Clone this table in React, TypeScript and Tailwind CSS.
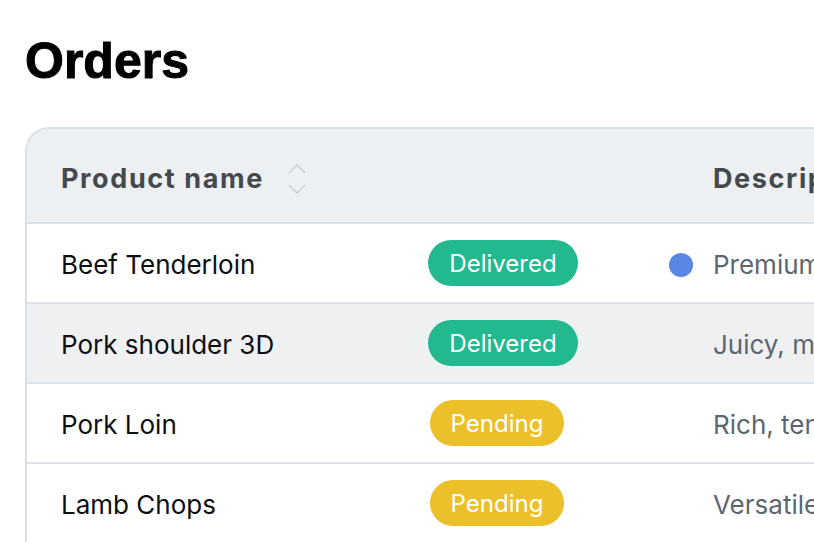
import React from "react";

type Status = "Delivered" | "Pending";

const orders: { name: string; status: Status; desc: string; dot?: boolean }[] = [
  { name: "Beef Tenderloin", status: "Delivered", desc: "Premium cut, tender and lean", dot: true },
  { name: "Pork shoulder 3D", status: "Delivered", desc: "Juicy, marbled and slow-cook ready" },
  { name: "Pork Loin", status: "Pending", desc: "Rich, tender and versatile" },
  { name: "Lamb Chops", status: "Pending", desc: "Versatile and full of flavour" },
];

function SortIcon() {
  return (
    <svg width="18" height="32" viewBox="0 0 18 32" fill="none" className="shrink-0 text-[#c9cfd5]">
      <path d="M1 10L9 2L17 10" stroke="currentColor" strokeWidth="1.4" />
      <path d="M1 22L9 30L17 22" stroke="currentColor" strokeWidth="1.4" />
    </svg>
  );
}

function Badge({ status }: { status: Status }) {
  const cls =
    status === "Delivered"
      ? "bg-[#22b890] w-[150px]"
      : "bg-[#ecc02a] w-[134px] ml-[2px]";
  return (
    <span className={`inline-flex h-[46px] items-center justify-center rounded-full pt-[1px] text-[24px] text-white ${cls}`}>
      {status}
    </span>
  );
}

export default function App() {
  return (
    <div className="h-screen w-full overflow-hidden bg-white font-['Inter',sans-serif]">
      <h1 className="ml-[25px] pt-[36px] font-['Liberation_Sans',Arial,sans-serif] text-[50px] font-bold leading-none text-black [-webkit-text-stroke:1px_black]">
        Orders
      </h1>
      <div className="mt-[41px] ml-[25px] w-[1200px] rounded-tl-[24px] border-l-2 border-t-2 border-[#d9e1e8] overflow-hidden">
        <div className="flex h-[95px] items-center border-b-2 border-[#d9e1e8] bg-[#ecf0f3] pt-[7px] text-[27px] font-bold tracking-[0.06em] text-[#45494e]">
          <div className="flex w-[641px] shrink-0 items-center gap-[24px] pl-[34px]">
            Product name
            <SortIcon />
          </div>
          <div className="w-[45px] shrink-0" />
          <div className="whitespace-nowrap">Description</div>
        </div>
        {orders.map((o, i) => (
          <div
            key={o.name}
            className={`flex h-[80px] items-center border-b-2 border-[#dde3e8] text-[26px] ${i === 1 ? "bg-[#eef0f2]" : "bg-white"}`}
          >
            <div className="w-[401px] shrink-0 pl-[34px] pt-[2px] text-[#0d0f11]">{o.name}</div>
            <div className="w-[240px] shrink-0">
              <Badge status={o.status} />
            </div>
            <div className="flex w-[45px] shrink-0 items-center">
              {o.dot && <span className="ml-[1px] mt-[4px] h-[24px] w-[24px] rounded-full bg-[#5a86e6]" />}
            </div>
            <div className="whitespace-nowrap pt-[2px] text-[#5b6770]">{o.desc}</div>
          </div>
        ))}
      </div>
    </div>
  );
}
